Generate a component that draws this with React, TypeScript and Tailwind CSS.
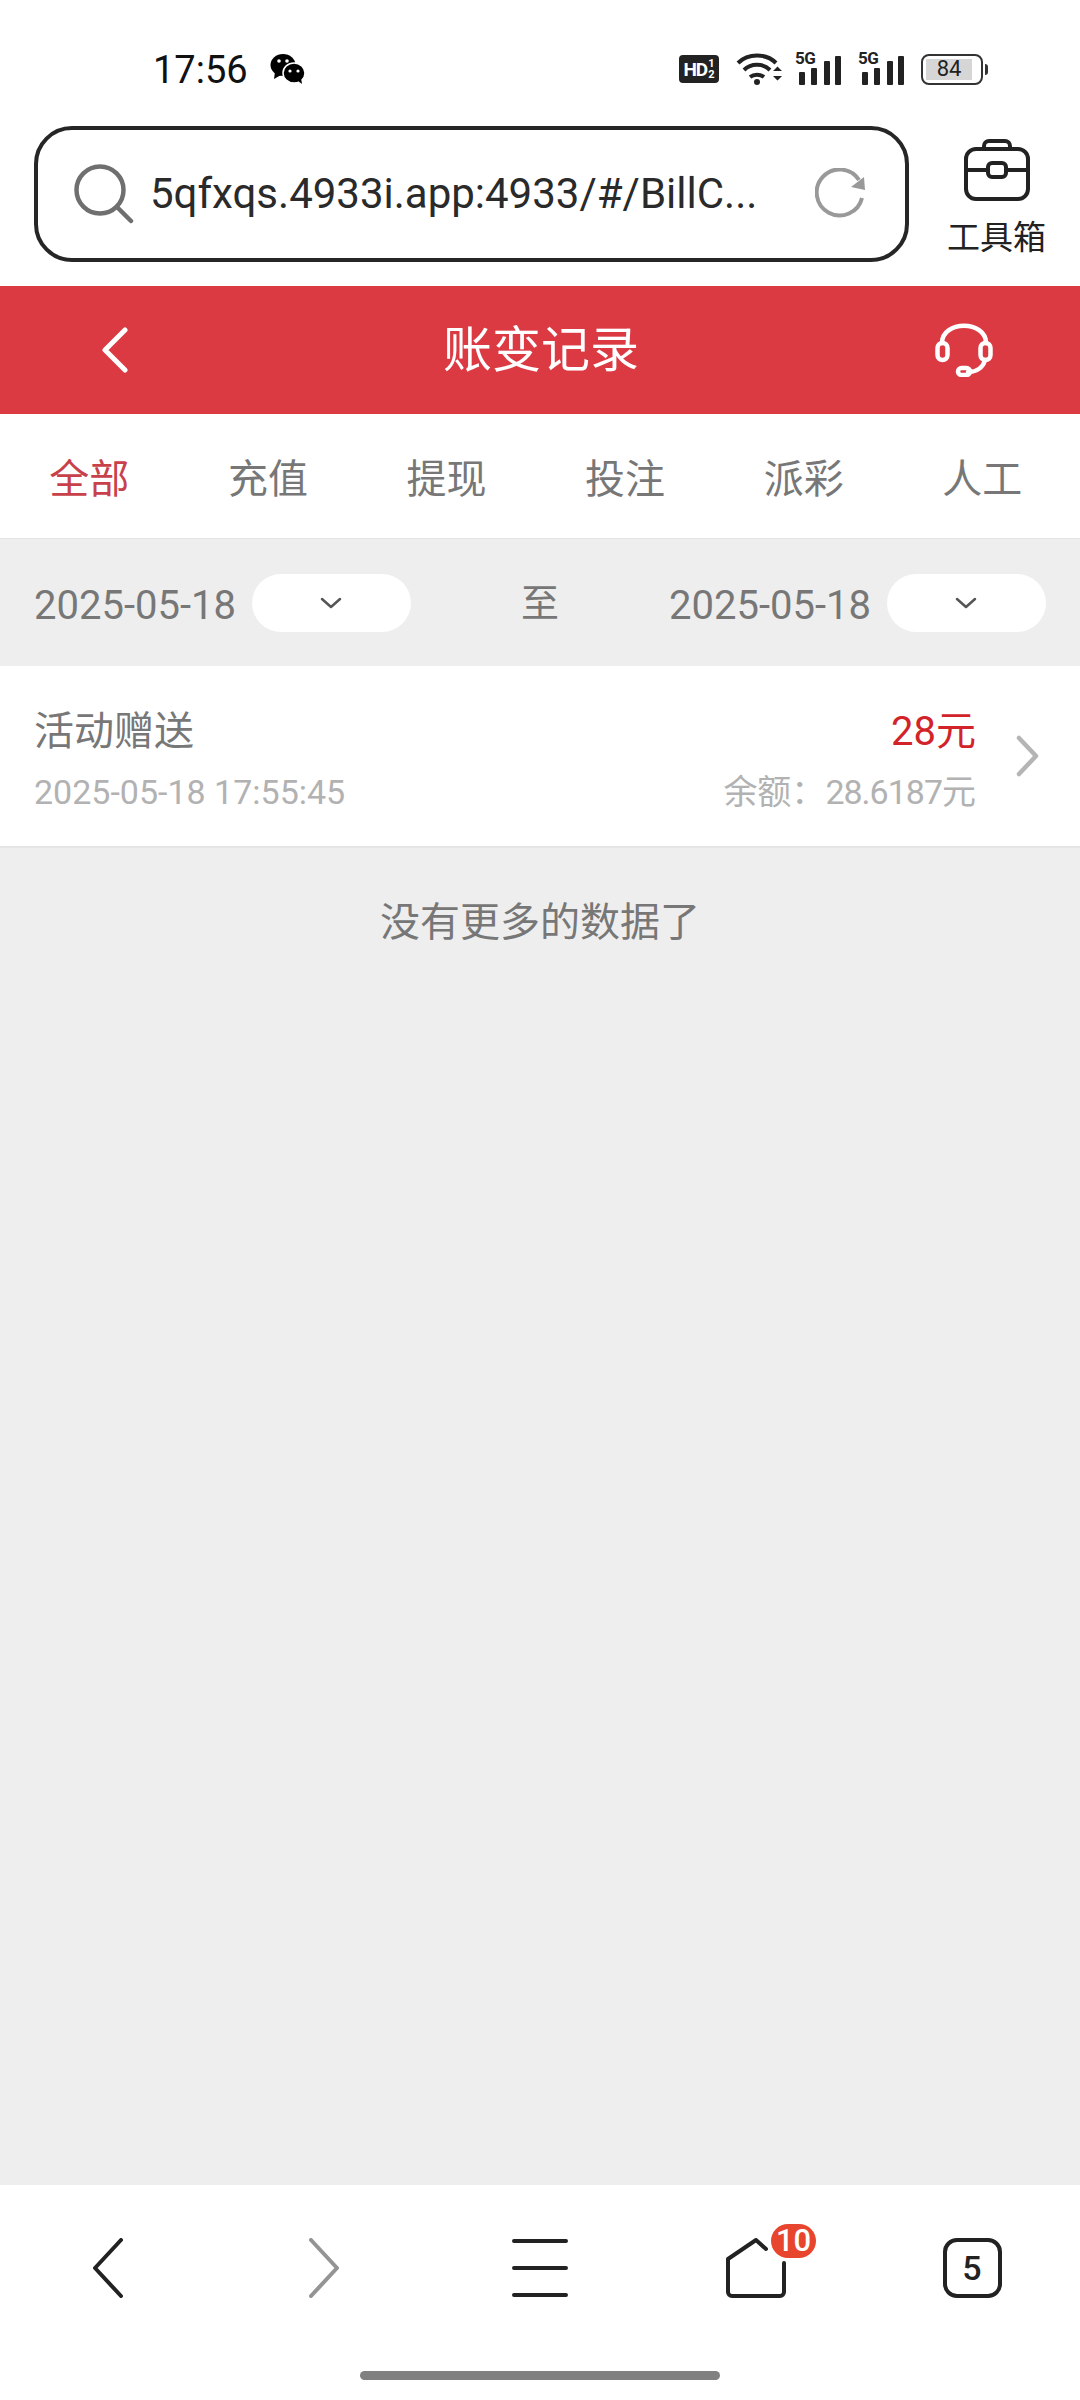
import React from 'react';

const tabs = ['全部', '充值', '提现', '投注', '派彩', '人工'];

const SignalIcon: React.FC = () => (
  <div className="relative w-[47px] h-[32px]">
    <span className="absolute left-0 top-[-5px] text-[17px] leading-[20px] font-bold tracking-[-0.5px] text-[#222]">5G</span>
    <svg width="47" height="32" viewBox="0 0 47 32" className="absolute left-0 top-0">
      <rect x="4" y="19" width="6" height="13" rx="1" fill="#222" />
      <rect x="16" y="15" width="6" height="17" rx="1" fill="#222" />
      <rect x="29" y="8" width="6" height="24" rx="1" fill="#222" />
      <rect x="40" y="3" width="6" height="29" rx="1" fill="#222" />
    </svg>
  </div>
);

const DateSelect: React.FC = () => (
  <div className="flex items-center">
    <span className="pt-[6px] text-[40px] leading-none text-[#777]">2025-05-18</span>
    <div className="ml-[16px] flex h-[58px] w-[159px] items-center justify-center rounded-full bg-white">
      <svg width="24" height="14" viewBox="0 0 24 14" fill="none" stroke="#555" strokeWidth="2.5" strokeLinecap="round" strokeLinejoin="round">
        <path d="M3 3l9 8 9-8" />
      </svg>
    </div>
  </div>
);

const App: React.FC = () => {
  return (
    <div className="flex h-[2400px] w-[1080px] flex-col overflow-hidden bg-white font-['Roboto','Noto_Sans_CJK_SC',sans-serif]">
      {/* status bar */}
      <div className="flex h-[126px] shrink-0 items-start pt-[50px]">
        <span className="ml-[153px] text-[38px] leading-[40px] text-[#111]">17:56</span>
        <svg width="36" height="32" viewBox="0 0 36 32" className="ml-[22px] mt-[3px]">
          <ellipse cx="13" cy="12" rx="12.5" ry="11" fill="#000" />
          <path d="M5 19l-1 7 7-4z" fill="#000" />
          <ellipse cx="24" cy="20" rx="11" ry="10" fill="#000" stroke="#fff" strokeWidth="1.5" />
          <path d="M28 28l4 3-1-6z" fill="#000" />
          <circle cx="9" cy="8" r="1.8" fill="#fff" />
          <circle cx="17" cy="8" r="1.8" fill="#fff" />
          <circle cx="20" cy="18" r="1.6" fill="#fff" />
          <circle cx="28" cy="18" r="1.6" fill="#fff" />
        </svg>
        <div className="ml-auto mr-[92px] mt-[2px] flex items-center">
          <div className="flex h-[28px] w-[40px] items-center justify-center rounded-[4px] bg-[#222] text-white">
            <span className="text-[19px] font-bold leading-none tracking-[-1px]">HD</span>
            <span className="ml-[1px] flex flex-col text-[11px] font-bold leading-[11px]">
              <span>1</span>
              <span>2</span>
            </span>
          </div>
          <svg width="46" height="34" viewBox="0 0 46 34" className="ml-[17px]" fill="none" stroke="#222" strokeWidth="4">
            <path d="M2 11C12 1 30 1 40 11" />
            <path d="M8 18c7-7 19-7 26 0" />
            <path d="M14 25c4-3 10-3 14 0" />
            <circle cx="21" cy="30" r="3" fill="#222" stroke="none" />
            <path d="M37 19l4.500-4.500 4.500 4.500zM37 24l4.500 4.500 4.500-4.500z" fill="#222" stroke="none" />
          </svg>
          <div className="ml-[13px]"><SignalIcon /></div>
          <div className="ml-[16px]"><SignalIcon /></div>
          <div className="relative ml-[16px] mr-[5px] flex h-[31px] w-[62px] items-center rounded-[8px] border-2 border-[#333] px-[3px]">
            <div className="flex h-[21px] w-[46px] items-center justify-center bg-[#d6d6d6] text-[22px] leading-none text-[#222]">84</div>
            <div className="absolute right-[-7px] top-[8px] h-[11px] w-[3px] rounded-r-sm bg-[#333]" />
          </div>
        </div>
      </div>

      {/* browser address bar */}
      <div className="flex h-[160px] shrink-0 items-start px-[34px]">
        <div className="flex h-[136px] w-[875px] items-center rounded-[38px] border-[4px] border-[#262626] pl-[36px] pr-[38px]">
          <svg width="60" height="60" viewBox="0 0 60 60" fill="none" stroke="#6f6f6f" strokeWidth="4.500" strokeLinecap="round">
            <circle cx="26" cy="26" r="23.500" />
            <path d="M43 43l14 14" />
          </svg>
          <span className="ml-[16px] flex-1 whitespace-nowrap text-[42px] leading-none text-[#2a2a2a]">5qfxqs.4933i.app:4933/#/BillC...</span>
          <svg width="52" height="52" viewBox="0 0 52 52" fill="none" stroke="#999" strokeWidth="4">
            <path d="M47 30A23 23 0 1 1 44 12" />
            <path d="M36 19l14 3-1-13" fill="#999" stroke="none" />
          </svg>
        </div>
        <div className="ml-[38px] flex flex-col items-center pt-[13px]">
          <svg width="66" height="62" viewBox="0 0 66 62" fill="none" stroke="#222" strokeWidth="4">
            <rect x="2" y="10" width="62" height="50" rx="10" />
            <path d="M20 10V7a5 5 0 0 1 5-5h16a5 5 0 0 1 5 5v3" />
            <path d="M2 31h21M43 31h21" />
            <rect x="24" y="24" width="18" height="14" rx="4" />
          </svg>
          <span className="mt-[20px] whitespace-nowrap text-[33px] leading-none text-[#222]">工具箱</span>
        </div>
      </div>

      {/* page header */}
      <div className="flex h-[128px] shrink-0 items-center bg-[#dc3a43] text-white">
        <svg width="28" height="46" viewBox="0 0 28 46" className="ml-[101px]" fill="none" stroke="#fff" strokeWidth="5" strokeLinecap="round" strokeLinejoin="round">
          <path d="M24 3L4 23l20 20" />
        </svg>
        <span className="ml-[314px] text-[49px] leading-none">账变记录</span>
        <svg width="58" height="54" viewBox="0 0 58 54" className="ml-[296px]" fill="none" stroke="#fff" strokeWidth="4.500" strokeLinecap="round">
          <path d="M7 20C7 -3 51 -3 51 20" />
          <rect x="2.500" y="20" width="10" height="17" rx="5" />
          <rect x="45.500" y="20" width="10" height="17" rx="5" />
          <path d="M50 37c-2 8-9 12-17 12" />
          <rect x="23" y="45" width="12" height="7" rx="3.500" />
        </svg>
      </div>

      {/* type tabs */}
      <div className="flex h-[125px] shrink-0 items-center border-b border-[#e3e3e3] pt-[8px]">
        {tabs.map((tab, i) => (
          <div key={tab} className={`w-[178.6px] text-center text-[40px] leading-none ${i === 0 ? 'text-[#c8414a]' : 'text-[#777]'}`}>
            {tab}
          </div>
        ))}
      </div>

      <div className="flex flex-1 flex-col bg-[#eeeeee]">
        {/* date range */}
        <div className="flex h-[127px] shrink-0 items-center justify-between px-[34px]">
          <DateSelect />
          <span className="text-[38px] leading-none text-[#777]">至</span>
          <DateSelect />
        </div>

        {/* bill row */}
        <div className="flex h-[182px] shrink-0 items-center border-b-2 border-[#e5e5e5] bg-white pl-[34px] pr-[40px]">
          <div className="flex-1 pt-[7px]">
            <div className="text-[40px] leading-[48px] text-[#777]">活动赠送</div>
            <div className="mt-[16px] text-[34px] leading-[40px] text-[#b2b2b2]">2025-05-18 17:55:45</div>
          </div>
          <div className="pt-[7px] text-right">
            <div className="text-[40px] leading-[48px] text-[#d2232a]">28元</div>
            <div className="mt-[16px] text-[34px] leading-[40px] text-[#b2b2b2]">
              余额：<span className="tracking-[-1px]">28.6187</span>元
            </div>
          </div>
          <svg width="24" height="42" viewBox="0 0 24 42" className="ml-[40px]" fill="none" stroke="#b5b5b5" strokeWidth="4.500" strokeLinecap="round" strokeLinejoin="round">
            <path d="M3 3l17 18L3 39" />
          </svg>
        </div>

        <div className="mt-[51px] text-center text-[40px] leading-[48px] text-[#777]">没有更多的数据了</div>
      </div>

      {/* browser toolbar */}
      <div className="flex h-[215px] shrink-0 flex-col bg-white">
        <div className="grid h-[186px] grid-cols-5 items-center pb-[21px] text-[#222]">
          <div className="flex justify-center">
            <svg width="34" height="60" viewBox="0 0 34 60" fill="none" stroke="#222" strokeWidth="4" strokeLinecap="round" strokeLinejoin="round">
              <path d="M30 2L4 30l26 28" />
            </svg>
          </div>
          <div className="flex justify-center">
            <svg width="34" height="60" viewBox="0 0 34 60" fill="none" stroke="#949494" strokeWidth="4" strokeLinecap="round" strokeLinejoin="round">
              <path d="M4 2l26 28L4 58" />
            </svg>
          </div>
          <div className="flex justify-center">
            <svg width="56" height="58" viewBox="0 0 56 58" fill="none" stroke="#222" strokeWidth="4" strokeLinecap="round">
              <path d="M2 2h52M2 29h52M2 56h52" />
            </svg>
          </div>
          <div className="flex justify-center">
            <div className="relative h-[60px] w-[60px]">
              <svg width="60" height="60" viewBox="0 0 60 60" fill="none" stroke="#222" strokeWidth="4" strokeLinejoin="round" strokeLinecap="round">
                <path d="M40 11L30 2 2 21v33a4 4 0 0 0 4 4h48a4 4 0 0 0 4-4V25" />
              </svg>
              <div className="absolute left-[45px] top-[-14px] flex h-[34px] w-[45px] items-center justify-center rounded-full bg-[#e8452f] text-[31px] font-medium leading-none text-white">10</div>
            </div>
          </div>
          <div className="flex justify-center">
            <div className="flex h-[60px] w-[59px] items-center justify-center rounded-[14px] border-[4px] border-[#222] text-[34px] font-medium leading-none">5</div>
          </div>
        </div>
        <div className="mx-auto h-[9px] w-[360px] rounded-full bg-[#808080]" />
      </div>
    </div>
  );
};

export default App;
